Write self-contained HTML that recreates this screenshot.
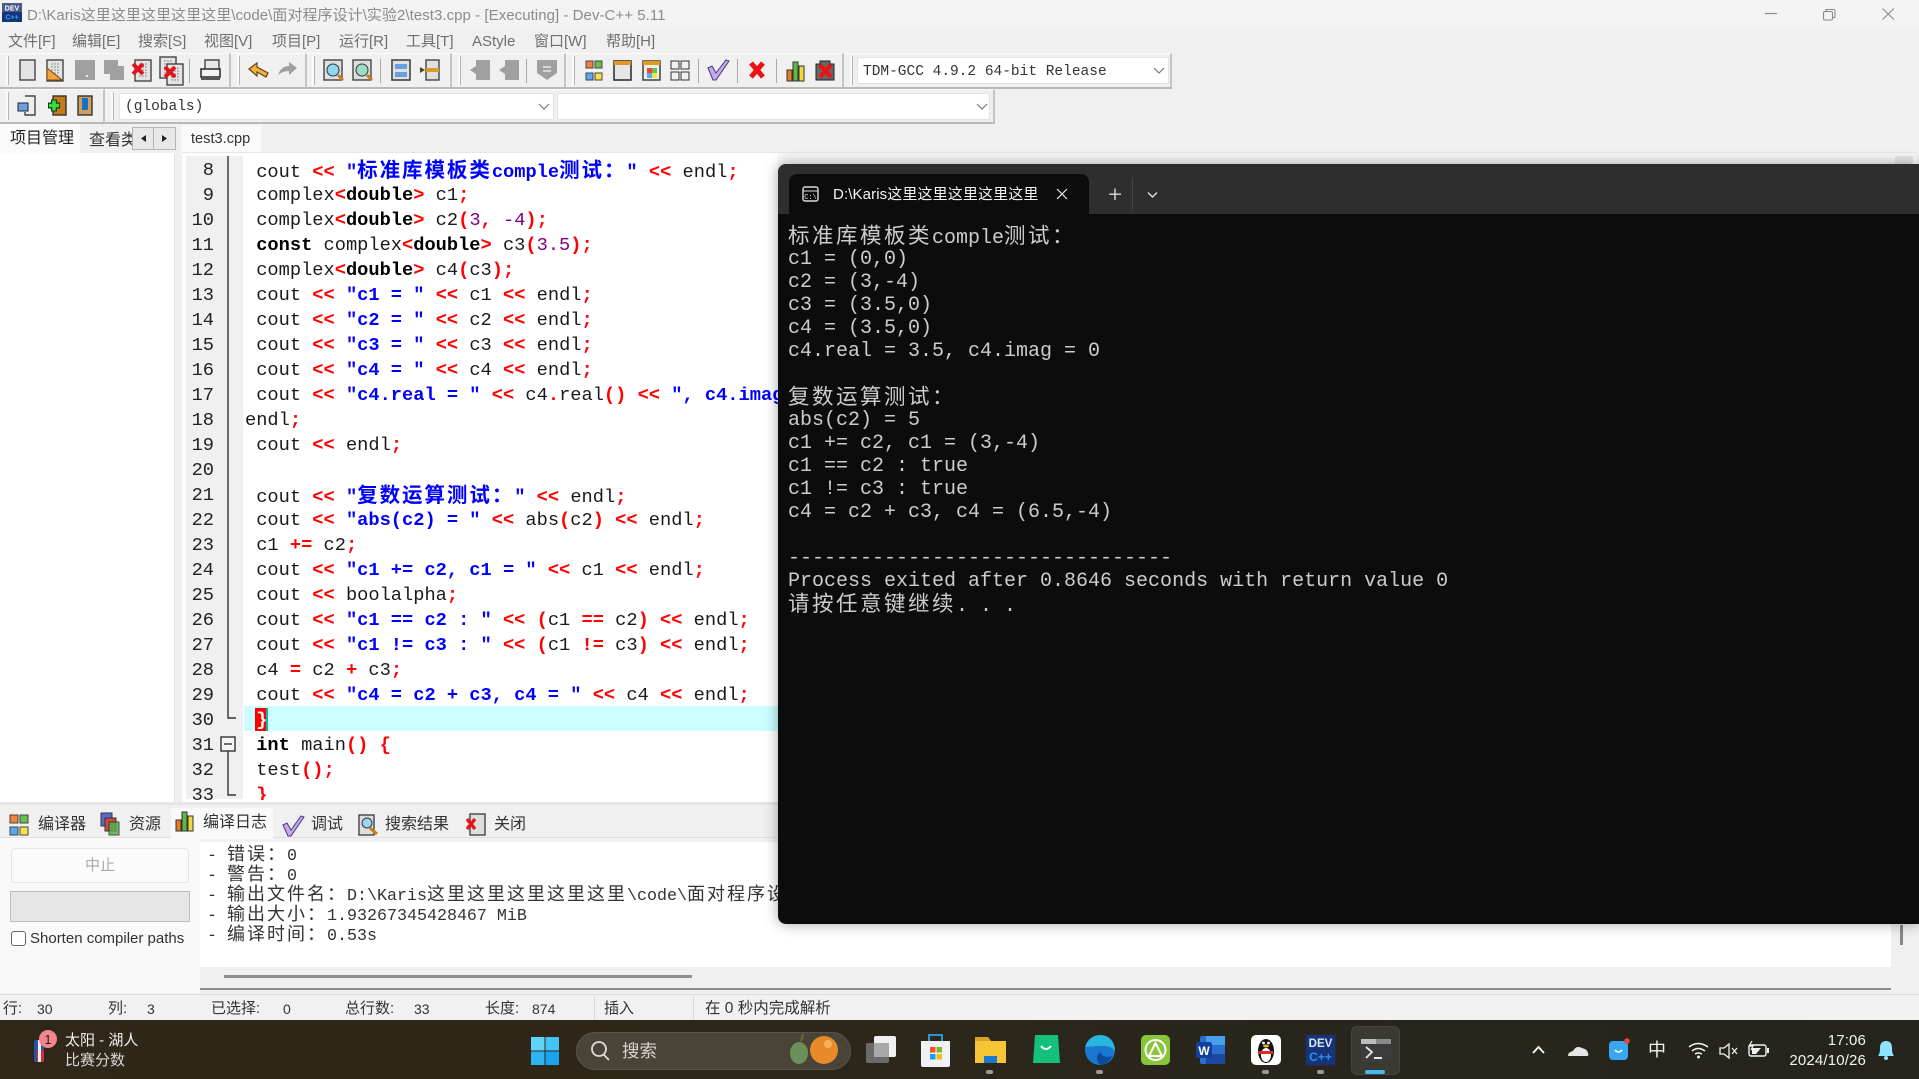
<!DOCTYPE html>
<html lang="zh"><head><meta charset="utf-8"><title>Dev-C++</title>
<style>
html,body{margin:0;padding:0;width:1919px;height:1079px;overflow:hidden;background:#f0f0f0}
body{position:relative;font-family:"Liberation Sans","Noto Sans CJK SC",sans-serif;color:#222}
.a{position:absolute;box-sizing:border-box}
.t{position:absolute;white-space:pre;line-height:20px}
.m{position:absolute;top:32px;font-size:15px;line-height:20px;color:#6f6f6f;white-space:pre}
.code{position:absolute;left:245px;top:158px;font:18.7px/25px "Liberation Mono","Noto Sans CJK SC",monospace;color:#1a1a1a}
.code div{height:25px;white-space:pre}
.code div.up{position:relative;top:-2px}
.nums{position:absolute;left:186px;width:28px;top:158px;text-align:right;font:18.7px/25px "Liberation Mono",monospace;color:#222;white-space:pre}
.s{color:#0000ff;font-weight:bold}.o{color:#ff0000;font-weight:bold}.n{color:#800080}.k{font-weight:bold;color:#000}
.c{font-style:normal;font-family:"Noto Sans CJK SC",sans-serif;font-size:20.5px;letter-spacing:1.94px}
.cc{letter-spacing:-9.3px}
.con{position:absolute;left:788px;top:225px;font:20px/23px "Liberation Mono","Noto Sans CJK SC",monospace;color:#cccccc}
.con div{height:23px;white-space:pre}
.con div.up{position:relative;top:-2px}
.con i{font-style:normal;font-family:"Noto Sans CJK SC",sans-serif;font-size:21.5px;letter-spacing:2.5px}
.log{position:absolute;left:207px;top:843px;font:16.67px/20px "Liberation Mono","Noto Sans CJK SC",monospace;color:#333}
.log div{height:20px;white-space:pre}
.log i{font-style:normal;font-family:"Noto Sans CJK SC",sans-serif;font-size:18px;letter-spacing:2px}
.tb{position:absolute;box-sizing:border-box;background:#f0f0f0;border-bottom:2px solid #b9b9b9;border-right:2px solid #c4c4c4;border-top:1px solid #fafafa}
.grip{position:absolute;width:2px;background:#fbfbfb;border-right:1px solid #b5b5b5}
.sep{position:absolute;width:1px;background:#a8a8a8;height:24px;top:59px}
.combo{position:absolute;box-sizing:border-box;background:#fff;border:1px solid #e3e3e3;border-radius:2px;font:14.5px/25px "Liberation Mono",monospace;color:#333;padding:1px 0 0 5px;white-space:pre}
.tab{position:absolute;font-size:16px;line-height:22px;top:814px;color:#333;white-space:pre}
.st{position:absolute;top:999px;font-size:15px;line-height:20px;color:#333;white-space:pre}
</style></head><body>

<!-- title bar -->
<div class="a" style="left:0;top:0;width:1919px;height:30px;background:#f3f3f3"></div>
<div class="t" style="left:27px;top:6px;font-size:15px;letter-spacing:.05px;color:#8b8b8b">D:\Karis这里这里这里这里这里\code\面对程序设计\实验2\test3.cpp - [Executing] - Dev-C++ 5.11</div>

<!-- menu -->
<div class="m" style="left:8px">文件[F]</div><div class="m" style="left:72px">编辑[E]</div><div class="m" style="left:138px">搜索[S]</div><div class="m" style="left:204px">视图[V]</div><div class="m" style="left:272px">项目[P]</div><div class="m" style="left:339px">运行[R]</div><div class="m" style="left:406px">工具[T]</div><div class="m" style="left:472px">AStyle</div><div class="m" style="left:534px">窗口[W]</div><div class="m" style="left:606px">帮助[H]</div>

<!-- toolbars -->
<div class="tb" style="left:0;top:53px;width:231px;height:36px"></div>
<div class="tb" style="left:231px;top:53px;width:76px;height:36px"></div>
<div class="tb" style="left:307px;top:53px;width:145px;height:36px"></div>
<div class="tb" style="left:452px;top:53px;width:114px;height:36px"></div>
<div class="tb" style="left:566px;top:53px;width:278px;height:36px"></div>
<div class="tb" style="left:844px;top:53px;width:328px;height:36px"></div>
<div class="tb" style="left:0;top:89px;width:105px;height:35px"></div>
<div class="tb" style="left:105px;top:89px;width:890px;height:35px"></div>
<div class="grip" style="left:6px;top:56px;height:29px"></div><div class="grip" style="left:237px;top:56px;height:29px"></div><div class="grip" style="left:312px;top:56px;height:29px"></div><div class="grip" style="left:458px;top:56px;height:29px"></div><div class="grip" style="left:572px;top:56px;height:29px"></div><div class="grip" style="left:850px;top:56px;height:29px"></div>
<div class="grip" style="left:6px;top:92px;height:28px"></div><div class="grip" style="left:111px;top:92px;height:28px"></div>
<div class="sep" style="left:189px"></div><div class="sep" style="left:380px"></div><div class="sep" style="left:526px"></div><div class="sep" style="left:698px"></div><div class="sep" style="left:737px"></div><div class="sep" style="left:776px"></div>
<div class="combo" style="left:857px;top:57px;width:312px;height:27px;padding-top:2px">TDM-GCC 4.9.2 64-bit Release</div>
<div class="combo" style="left:119px;top:93px;width:435px;height:27px">(globals)</div>
<div class="combo" style="left:557px;top:93px;width:433px;height:27px"></div>

<!-- left panel tabs -->
<div class="a" style="left:0;top:124px;width:80px;height:30px;background:#fafafa"></div>
<div class="t" style="left:10px;top:128px;font-size:16px;line-height:22px">项目管理</div>
<div class="a" style="left:89px;top:126px;width:43px;height:26px;overflow:hidden;font-size:16px;line-height:26px;padding-top:2px;color:#333;background:#f0f0f0;white-space:nowrap">查看类</div>
<div class="a" style="left:132px;top:127px;width:44px;height:23px;background:#e8e8e8;border:1px solid #b4b4b4"></div>
<div class="a" style="left:153px;top:127px;width:1px;height:23px;background:#b4b4b4"></div>
<div class="a" style="left:0;top:153px;width:175px;height:649px;background:#fff;border-right:1px solid #e4e4e4"></div>

<div class="a" style="left:181px;top:125px;width:80px;height:29px;background:#fafafa"></div>
<div class="t" style="left:191px;top:128px;font-size:14.6px;line-height:22px;color:#333">test3.cpp</div>

<!-- editor -->
<div class="a" style="left:182px;top:152px;width:1734px;height:650px;background:#f7f7f7;border-top:1px solid #e6e6e6"></div>
<div class="a" style="left:182px;top:153px;width:596px;height:649px;background:#fff"></div>
<div class="a" style="left:1895px;top:156px;width:18px;height:10px;background:#e6e6e6"></div>
<div class="a" style="left:186px;top:156px;width:57px;height:643px;background:#f0f0f0"></div>
<div class="a" style="left:244px;top:706px;width:540px;height:25px;background:#ccffff"></div>
<div class="a" style="left:255px;top:708px;width:12px;height:23px;background:#ff0000"></div>
<div class="a" style="left:266px;top:708px;width:2px;height:23px;background:#00b8b8"></div>
<div class="a" style="left:0;top:802px;width:778px;height:3px;background:#e6e6e6"></div>

<div style="position:absolute;left:0;top:0;width:778px;height:800px;overflow:hidden">
<div class="nums">8
9
10
11
12
13
14
15
16
17
18
19
20
21
22
23
24
25
26
27
28
29
30
31
32
33</div>
<div class="code"><div class="up"> cout <span class="o">&lt;&lt;</span> <span class="s">"<i class="c">标准库模板类</i>comple<i class="c">测试</i><i class="c cc">：</i> "</span> <span class="o">&lt;&lt;</span> endl<span class="o">;</span></div>
<div> complex<span class="o">&lt;</span><span class="k">double</span><span class="o">&gt;</span> c1<span class="o">;</span></div>
<div> complex<span class="o">&lt;</span><span class="k">double</span><span class="o">&gt;</span> c2<span class="o">(</span><span class="n">3</span><span class="o">,</span> <span class="n">-4</span><span class="o">);</span></div>
<div> <span class="k">const</span> complex<span class="o">&lt;</span><span class="k">double</span><span class="o">&gt;</span> c3<span class="o">(</span><span class="n">3.5</span><span class="o">);</span></div>
<div> complex<span class="o">&lt;</span><span class="k">double</span><span class="o">&gt;</span> c4<span class="o">(</span>c3<span class="o">);</span></div>
<div> cout <span class="o">&lt;&lt;</span> <span class="s">"c1 = "</span> <span class="o">&lt;&lt;</span> c1 <span class="o">&lt;&lt;</span> endl<span class="o">;</span></div>
<div> cout <span class="o">&lt;&lt;</span> <span class="s">"c2 = "</span> <span class="o">&lt;&lt;</span> c2 <span class="o">&lt;&lt;</span> endl<span class="o">;</span></div>
<div> cout <span class="o">&lt;&lt;</span> <span class="s">"c3 = "</span> <span class="o">&lt;&lt;</span> c3 <span class="o">&lt;&lt;</span> endl<span class="o">;</span></div>
<div> cout <span class="o">&lt;&lt;</span> <span class="s">"c4 = "</span> <span class="o">&lt;&lt;</span> c4 <span class="o">&lt;&lt;</span> endl<span class="o">;</span></div>
<div> cout <span class="o">&lt;&lt;</span> <span class="s">"c4.real = "</span> <span class="o">&lt;&lt;</span> c4<span class="o">.</span>real<span class="o">()</span> <span class="o">&lt;&lt;</span> <span class="s">", c4.imag = "</span> <span class="o">&lt;&lt;</span> c4<span class="o">.</span>imag<span class="o">()</span> <span class="o">&lt;&lt;</span></div>
<div>endl<span class="o">;</span></div>
<div> cout <span class="o">&lt;&lt;</span> endl<span class="o">;</span></div>
<div> </div>
<div class="up"> cout <span class="o">&lt;&lt;</span> <span class="s">"<i class="c">复数运算测试</i><i class="c cc">：</i> "</span> <span class="o">&lt;&lt;</span> endl<span class="o">;</span></div>
<div> cout <span class="o">&lt;&lt;</span> <span class="s">"abs(c2) = "</span> <span class="o">&lt;&lt;</span> abs<span class="o">(</span>c2<span class="o">)</span> <span class="o">&lt;&lt;</span> endl<span class="o">;</span></div>
<div> c1 <span class="o">+=</span> c2<span class="o">;</span></div>
<div> cout <span class="o">&lt;&lt;</span> <span class="s">"c1 += c2, c1 = "</span> <span class="o">&lt;&lt;</span> c1 <span class="o">&lt;&lt;</span> endl<span class="o">;</span></div>
<div> cout <span class="o">&lt;&lt;</span> boolalpha<span class="o">;</span></div>
<div> cout <span class="o">&lt;&lt;</span> <span class="s">"c1 == c2 : "</span> <span class="o">&lt;&lt;</span> <span class="o">(</span>c1 <span class="o">==</span> c2<span class="o">)</span> <span class="o">&lt;&lt;</span> endl<span class="o">;</span></div>
<div> cout <span class="o">&lt;&lt;</span> <span class="s">"c1 != c3 : "</span> <span class="o">&lt;&lt;</span> <span class="o">(</span>c1 <span class="o">!=</span> c3<span class="o">)</span> <span class="o">&lt;&lt;</span> endl<span class="o">;</span></div>
<div> c4 <span class="o">=</span> c2 <span class="o">+</span> c3<span class="o">;</span></div>
<div> cout <span class="o">&lt;&lt;</span> <span class="s">"c4 = c2 + c3, c4 = "</span> <span class="o">&lt;&lt;</span> c4 <span class="o">&lt;&lt;</span> endl<span class="o">;</span></div>
<div> <span style="color:#fff;font-weight:bold">}</span></div>
<div> <span class="k">int</span> main<span class="o">()</span> <span class="o">{</span></div>
<div> test<span class="o">();</span></div>
<div> <span class="o">}</span></div></div>
</div>

<!-- fold marks -->
<svg class="a" style="left:215px;top:153px" width="28" height="650" viewBox="0 0 28 650" fill="none" stroke="#333" stroke-width="1.4">
<path d="M13 3V565H21M13 598V642H21"/><rect x="6" y="584" width="14" height="14" fill="#f5f5f5"/><path d="M9 591H17"/>
</svg>

<!-- bottom tabs -->
<div class="a" style="left:0;top:837px;width:1919px;height:1px;background:#e0e0e0"></div>
<div class="a" style="left:171px;top:808px;width:102px;height:31px;background:#f9f9f9"></div>
<div class="tab" style="left:38px">编译器</div><div class="tab" style="left:129px">资源</div><div class="tab" style="left:203px;top:812px">编译日志</div><div class="tab" style="left:311px">调试</div><div class="tab" style="left:385px">搜索结果</div><div class="tab" style="left:494px">关闭</div>

<!-- bottom-left controls -->
<div class="a" style="left:0;top:838px;width:200px;height:155px;background:#f9f9f9"></div>
<div class="a" style="left:11px;top:848px;width:178px;height:35px;background:#fbfbfb;border:1px solid #e6e6e6;border-radius:4px;text-align:center;line-height:33px;font-size:15px;color:#aaa">中止</div>
<div class="a" style="left:10px;top:891px;width:180px;height:31px;background:#e6e6e6;border:1px solid #bcbcbc"></div>
<div class="a" style="left:11px;top:931px;width:15px;height:15px;background:#fff;border:1px solid #666;border-radius:3px"></div>
<div class="t" style="left:30px;top:929px;font-size:15px;color:#333">Shorten compiler paths</div>

<!-- log -->
<div class="a" style="left:200px;top:842px;width:1691px;height:125px;background:#fff"></div>
<div class="log"><div>- <i>错误：</i>0</div><div>- <i>警告：</i>0</div><div>- <i>输出文件名：</i>D:\Karis<i>这里这里这里这里这里</i>\code\<i>面对程序设计</i>\<i>实验</i>2\test3.exe</div><div>- <i>输出大小：</i>1.93267345428467 MiB</div><div>- <i>编译时间：</i>0.53s</div></div>
<div class="a" style="left:200px;top:967px;width:1691px;height:23px;background:#f0f0f0;border-bottom:2px solid #8d8d8d"></div>
<div class="a" style="left:224px;top:975px;width:468px;height:3px;background:#8f8f8f"></div>
<div class="a" style="left:1900px;top:925px;width:3px;height:20px;background:#888"></div>

<!-- status bar -->
<div class="a" style="left:0;top:994px;width:1919px;height:27px;background:#f1f1f1;border-top:1px solid #dcdcdc"></div>
<div class="st" style="left:3px">行:</div><div class="st" style="left:37px;font-size:14px">30</div><div class="st" style="left:108px">列:</div><div class="st" style="left:147px;font-size:14px">3</div><div class="st" style="left:211px">已选择:</div><div class="st" style="left:283px;font-size:14px">0</div><div class="st" style="left:345px">总行数:</div><div class="st" style="left:414px;font-size:14px">33</div><div class="st" style="left:485px">长度:</div><div class="st" style="left:532px;font-size:14px">874</div><div class="st" style="left:604px">插入</div><div class="st" style="left:705px;font-size:15.5px">在 0 秒内完成解析</div>
<div class="a" style="left:594px;top:996px;width:1px;height:24px;background:#d8d8d8"></div><div class="a" style="left:693px;top:996px;width:1px;height:24px;background:#d8d8d8"></div>

<!-- taskbar -->
<div class="a" style="left:0;top:1020px;width:1919px;height:59px;background:linear-gradient(90deg,#2f2717 0%,#2d2719 40%,#27261d 75%,#24241d 100%)"></div>
<div class="t" style="left:65px;top:1031px;font-size:15px;color:#f2f2f2">太阳 - 湖人</div>
<div class="t" style="left:65px;top:1051px;font-size:15px;color:#d8d8d8">比赛分数</div>
<div class="a" style="left:576px;top:1032px;width:275px;height:38px;border-radius:19px;background:#4a4438;border:1px solid #5a554a"></div>
<div class="t" style="left:622px;top:1039px;font-size:17.5px;line-height:24px;color:#d6d3cc">搜索</div>
<div class="t" style="left:1760px;top:1031px;width:106px;text-align:right;font-size:15px;letter-spacing:.15px;color:#f2f2f2">17:06</div>
<div class="t" style="left:1760px;top:1051px;width:106px;text-align:right;font-size:15px;letter-spacing:.15px;color:#f2f2f2">2024/10/26</div>
<div class="t" style="left:1648px;top:1038px;font-size:18px;line-height:24px;color:#f2f2f2">中</div>
<div class="a" style="left:1351px;top:1026px;width:49px;height:49px;background:#3a3a33;border-radius:6px;border:1px solid #45453d"></div>

<!-- console window -->
<div class="a" style="left:778px;top:164px;width:1141px;height:760px;background:#0c0c0c;border-radius:8px 0 0 8px;box-shadow:0 0 14px rgba(0,0,0,.35)"></div>
<div class="a" style="left:778px;top:164px;width:1141px;height:50px;background:#2e2e2e;border-radius:8px 0 0 0"></div>
<div class="a" style="left:789px;top:174px;width:300px;height:40px;background:#0c0c0c;border-radius:8px 8px 0 0"></div>
<div class="t" style="left:833px;top:185px;font-size:15px;letter-spacing:.12px;color:#f4f4f4">D:\Karis这里这里这里这里这里</div>
<div class="a" style="left:1132px;top:178px;width:1px;height:32px;background:#454545"></div>
<div class="con"><div class="up"><i>标准库模板类</i>comple<i>测试：</i></div><div>c1 = (0,0)</div><div>c2 = (3,-4)</div><div>c3 = (3.5,0)</div><div>c4 = (3.5,0)</div><div>c4.real = 3.5, c4.imag = 0</div><div> </div><div class="up"><i>复数运算测试：</i></div><div>abs(c2) = 5</div><div>c1 += c2, c1 = (3,-4)</div><div>c1 == c2 : true</div><div>c1 != c3 : true</div><div>c4 = c2 + c3, c4 = (6.5,-4)</div><div> </div><div>--------------------------------</div><div>Process exited after 0.8646 seconds with return value 0</div><div class="up"><i>请按任意键继续</i>. . .</div></div>

<!-- all icons -->
<svg class="a" style="left:0;top:0" width="1919" height="1079" viewBox="0 0 1919 1079">
<defs>
<g id="paper"><rect x="-8" y="-10" width="16" height="21" fill="#e4e4e4" stroke="#444" stroke-width="1.4"/><path d="M-4-6H5M-4-3H5M-4 0H5M-4 3H5M-4 6H5" stroke="#8e8e8e" stroke-dasharray="2 1"/></g>
<g id="xr"><path d="M-5-5L5 5M5-5L-5 5" stroke="#e2141c" stroke-width="4" fill="none"/></g>
</defs>
<!-- app logo -->
<rect x="2" y="3" width="20" height="19" fill="#14357a"/><rect x="2" y="3" width="20" height="9" fill="#4a5a8a"/><text x="12" y="10.5" text-anchor="middle" font-family="Liberation Sans" font-size="7" font-weight="bold" fill="#fff">DEV</text><text x="12" y="19.5" text-anchor="middle" font-family="Liberation Sans" font-size="7" font-weight="bold" fill="#35a0ff">C++</text>
<!-- window controls -->
<path d="M1765 13.5H1777" stroke="#8a8a8a" stroke-width="1.2"/>
<g fill="none" stroke="#8a8a8a" stroke-width="1.1"><rect x="1823.5" y="11.5" width="9" height="8.5" rx="1.5"/><path d="M1826 11V9.5h7.5q1.5 0 1.500 1.500V17.500h-2"/><path d="M1882.500 8.500L1894 19.500M1894 8.500L1882.500 19.500"/></g>

<!-- row 1 icons -->
<rect x="20" y="60" width="15" height="20" fill="#e4e4e4" stroke="#444" stroke-width="1.4"/>
<use href="#paper" x="55" y="70"/><path d="M47 68L62 80H47Z" fill="#f2a33a" stroke="#7a4a10"/>
<path d="M75 60H95V80H75Z" fill="#a0a0a0"/><rect x="86" y="75" width="2" height="2" fill="#eee"/>
<path d="M104 60H118V66H124V80H110V74H104Z" fill="#a0a0a0"/>
<use href="#paper" x="143" y="70"/><use href="#xr" x="138" y="69"/>
<use href="#paper" x="168" y="67"/><use href="#paper" x="175" y="74"/><use href="#xr" x="170" y="72"/>
<path d="M205 69V60H219V69" fill="#e8e8e8" stroke="#444" stroke-width="1.4"/><rect x="201" y="69" width="19" height="8" fill="#f3f3f3" stroke="#333" stroke-width="1.6"/><rect x="201" y="77" width="19" height="3" fill="#555"/>
<path d="M249 69L257 63V67L268 73L266 77L257 72V76Z" fill="#f0b33a" stroke="#6a4010" stroke-width="1.200"/>
<path d="M297 68L289 62V66Q281 66 278 75Q283 71 289 71V75Z" fill="#a0a0a0"/>
<rect x="324" y="60" width="18" height="20" fill="#dedede" stroke="#444" stroke-width="1.4"/><circle cx="333" cy="70" r="6" fill="#8fd6ee" stroke="#334"/><path d="M338 75L343 80" stroke="#c97f15" stroke-width="3"/>
<rect x="353" y="60" width="18" height="20" fill="#dedede" stroke="#444" stroke-width="1.4"/><circle cx="362" cy="70" r="6" fill="#9be0c4" stroke="#334"/><path d="M367 75L372 80" stroke="#c97f15" stroke-width="3"/>
<rect x="392" y="60" width="18" height="20" fill="#e0e0e0" stroke="#444" stroke-width="1.6"/><rect x="395" y="64" width="12" height="5" fill="#6a9ee0"/><rect x="395" y="72" width="12" height="5" fill="#6a9ee0"/>
<rect x="426" y="60" width="13" height="20" fill="#e0e0e0" stroke="#444" stroke-width="1.4"/><rect x="426" y="68" width="13" height="4" fill="#dd9a20"/><path d="M420 67L425 70L420 73Z" fill="#5a4410"/>
<path d="M476 60H490V80H476V74L470 70L476 66Z" fill="#a0a0a0"/>
<path d="M505 60H519V80H505V74L499 70L505 66Z" fill="#a0a0a0"/>
<path d="M537 60H557V73L547 80L537 73Z" fill="#a0a0a0"/><path d="M543 67H551M543 71H551" stroke="#e8e8e8" stroke-width="1.5"/>
<rect x="586" y="61" width="7" height="7" fill="#f08040" stroke="#444"/><rect x="595" y="61" width="7" height="7" fill="#6ac04a" stroke="#444"/><rect x="586" y="73" width="7" height="7" fill="#5aa8f0" stroke="#444"/><rect x="595" y="73" width="7" height="7" fill="#f4e44a" stroke="#444"/>
<rect x="614" y="61" width="17" height="19" fill="#e6e6e6" stroke="#333" stroke-width="1.6"/><rect x="614" y="61" width="17" height="4" fill="#e09a20"/>
<rect x="643" y="61" width="17" height="19" fill="#eee" stroke="#333" stroke-width="1.400"/><rect x="643" y="61" width="17" height="4" fill="#e09a20"/><rect x="647" y="68" width="5" height="5" fill="#e5483a"/><rect x="652" y="68" width="5" height="5" fill="#6ac04a"/><rect x="647" y="73" width="5" height="5" fill="#5aa8f0"/><rect x="652" y="73" width="5" height="5" fill="#f4e44a"/>
<rect x="671" y="61" width="8" height="8" fill="#f0f0f0" stroke="#333"/><rect x="681" y="61" width="8" height="8" fill="#f0f0f0" stroke="#333"/><rect x="671" y="72" width="8" height="8" fill="#f0f0f0" stroke="#333"/><rect x="681" y="72" width="8" height="8" fill="#f0f0f0" stroke="#333"/>
<path d="M708 68L712 66L716 73L726 60L729 61L716 80L713 80Z" fill="#c4a9ee" stroke="#4a3a7a" stroke-width="1"/>
<path d="M751 63L763 77M763 63L751 77" stroke="#ee1111" stroke-width="5"/>
<rect x="787" y="70" width="5" height="11" fill="#ec7a20" stroke="#333"/><rect x="793" y="62" width="5" height="19" fill="#5cb84a" stroke="#333"/><rect x="799" y="66" width="5" height="15" fill="#f0d840" stroke="#333"/>
<path d="M816 64H820V61H830V64H834V80H816Z" fill="#666" stroke="#222"/><path d="M820 65L831 77M831 65L820 77" stroke="#ee1111" stroke-width="4.200"/>

<!-- combo chevrons -->
<g fill="none" stroke="#777" stroke-width="1.200"><path d="M1154 68L1159 73L1164 68"/><path d="M539 104L544 109L549 104"/><path d="M977 104L982 109L987 104"/></g>
<!-- row 2 icons -->
<path d="M25 96H35V115H25V112" fill="#eee" stroke="#444" stroke-width="1.400"/><rect x="18" y="103" width="10" height="8" fill="#6a9ee0" stroke="#223"/>
<rect x="53" y="96" width="13" height="19" fill="#c47a18" stroke="#333" stroke-width="1.400"/><path d="M48 105.500H60M54 99.500V111.500" stroke="#1a3a1a" stroke-width="6"/><path d="M49 105.500H59M54 100.500V110.500" stroke="#3ae03a" stroke-width="3.500"/>
<rect x="78" y="96" width="14" height="19" fill="#cca060" stroke="#333" stroke-width="1.400"/><rect x="82" y="98" width="6" height="12" fill="#1d6fc0"/>

<!-- arrows of left tabs -->
<path d="M146 135V142L141 138.500Z" fill="#222"/><path d="M162 135V142L167 138.500Z" fill="#222"/>

<!-- bottom tab icons -->
<rect x="10" y="815" width="8" height="8" fill="#f08040" stroke="#444"/><rect x="20" y="815" width="8" height="8" fill="#6ac04a" stroke="#444"/><rect x="10" y="827" width="8" height="8" fill="#5aa8f0" stroke="#444"/><rect x="20" y="827" width="8" height="8" fill="#f4e44a" stroke="#444"/>
<rect x="101" y="813" width="11" height="13" fill="#5a6ad0" stroke="#333"/><rect x="105" y="818" width="11" height="13" fill="#d04a3a" stroke="#333"/><rect x="109" y="822" width="10" height="13" fill="#50b050" stroke="#333" opacity=".85"/>
<rect x="176" y="820" width="5" height="11" fill="#ec7a20" stroke="#333"/><rect x="182" y="812" width="5" height="19" fill="#5cb84a" stroke="#333"/><rect x="188" y="816" width="5" height="15" fill="#f0d840" stroke="#333"/>
<path d="M283 825L287 823L291 830L301 816L304 817L291 836L288 836Z" fill="#c4a9ee" stroke="#4a3a7a"/>
<rect x="359" y="815" width="15" height="20" fill="#dedede" stroke="#444" stroke-width="1.400"/><circle cx="367" cy="823" r="5" fill="#9bd8ee" stroke="#334"/><path d="M370 828L377 834" stroke="#c97f15" stroke-width="3"/>
<rect x="470" y="814" width="15" height="21" fill="#dedede" stroke="#444" stroke-width="1.400"/><path d="M467 819L475 829M475 819L467 829" stroke="#e2141c" stroke-width="3.400"/>

<!-- taskbar left -->
<rect x="34" y="1040" width="10" height="22" rx="2" fill="#2056a8"/><rect x="37" y="1050" width="7" height="12" fill="#d62a3a"/><rect x="38" y="1040" width="3" height="22" fill="#f0f0f0"/>
<circle cx="48" cy="1039" r="9" fill="#f3858d"/><text x="48" y="1044" text-anchor="middle" font-family="Liberation Sans" font-size="13" fill="#222">1</text>
<!-- windows -->
<g><rect x="531" y="1037" width="13.500" height="13.500" fill="#5fd4fa"/><rect x="545.500" y="1037" width="13.500" height="13.500" fill="#45c3f6"/><rect x="531" y="1051.500" width="13.500" height="13.500" fill="#2fb4f2"/><rect x="545.500" y="1051.500" width="13.500" height="13.500" fill="#1aa3ee"/></g>
<!-- search -->
<circle cx="599" cy="1049" r="7" fill="none" stroke="#ddd" stroke-width="1.800"/><path d="M604 1055L609 1060" stroke="#ddd" stroke-width="1.800"/>
<ellipse cx="799" cy="1053" rx="9" ry="11" fill="#6d8f5a"/><circle cx="824" cy="1050" r="14" fill="#e8892a"/><circle cx="828" cy="1044" r="4" fill="#f5b060"/><path d="M801 1041l2-7" stroke="#6b6b3a" stroke-width="2"/>
<!-- task view -->
<rect x="866" y="1043" width="23" height="20" rx="2" fill="#6a6a6a"/><rect x="874" y="1036" width="22" height="21" rx="2" fill="#f0f0f0"/><rect x="874" y="1043" width="15" height="14" fill="#a8a8a8"/>
<!-- store -->
<path d="M921 1041H950V1065Q950 1067 948 1067H923Q921 1067 921 1065Z" fill="#f1f1f1"/><path d="M929 1041V1035H942V1041" fill="none" stroke="#2aa8e8" stroke-width="1.800"/><rect x="930" y="1047" width="5.500" height="5.500" fill="#f0522a"/><rect x="936.500" y="1047" width="5.500" height="5.500" fill="#7ab82a"/><rect x="930" y="1054" width="5.500" height="5.500" fill="#1aa0e8"/><rect x="936.500" y="1054" width="5.500" height="5.500" fill="#f8b81a"/>
<!-- explorer -->
<path d="M975 1037H988L991 1041H1006V1063H975Z" fill="#f4c534"/><path d="M975 1037H988L991 1041H975Z" fill="#d9a02a"/><rect x="984" y="1056" width="13" height="7" fill="#1b7ad0"/>
<rect x="986" y="1070" width="7" height="4" rx="2" fill="#9a9a9a"/>
<!-- green app -->
<path d="M1035 1035H1058L1060 1063H1033Z" fill="#14c07c"/><path d="M1041 1046Q1046 1052 1051 1046" fill="none" stroke="#fff" stroke-width="1.800"/>
<!-- edge -->
<circle cx="1100" cy="1050" r="15" fill="#1a78d0"/><path d="M1085 1047Q1089 1035 1101 1035Q1114 1036 1115 1051Q1110 1045 1102 1046Q1092 1046 1085 1047Z" fill="#2ab4e0"/><path d="M1100 1052Q1103 1059 1112 1056Q1108 1065 1100 1065Q1094 1059 1100 1052Z" fill="#0c4a9c"/>
<rect x="1096" y="1070" width="7" height="4" rx="2" fill="#9a9a9a"/>
<!-- green A -->
<rect x="1141" y="1035" width="29" height="30" rx="5" fill="#8ac43a"/><circle cx="1155.500" cy="1050" r="10" fill="none" stroke="#fff" stroke-width="2"/><path d="M1155.500 1043L1162 1056H1149Z" fill="none" stroke="#fff" stroke-width="2"/>
<!-- word -->
<rect x="1200" y="1036" width="25" height="28" rx="2" fill="#2a6fd0"/><rect x="1206" y="1036" width="19" height="9" fill="#45a0ee"/><rect x="1206" y="1054" width="19" height="10" fill="#1a4aa0"/><rect x="1196" y="1042" width="16" height="16" rx="2" fill="#13409a"/><text x="1204" y="1055" text-anchor="middle" font-family="Liberation Sans" font-size="12" font-weight="bold" fill="#fff">W</text>
<!-- qq -->
<rect x="1251" y="1035" width="30" height="30" rx="5" fill="#fff"/><ellipse cx="1266" cy="1051" rx="8" ry="12" fill="#111"/><ellipse cx="1266" cy="1055" rx="5" ry="7" fill="#fff"/><rect x="1258" y="1051" width="15" height="3" fill="#e02a2a"/><ellipse cx="1266" cy="1046" rx="3" ry="1.500" fill="#f0b020"/><circle cx="1263.500" cy="1043" r="1.400" fill="#fff"/><circle cx="1268.500" cy="1043" r="1.400" fill="#fff"/>
<rect x="1262" y="1070" width="7" height="4" rx="2" fill="#9a9a9a"/>
<!-- devc -->
<rect x="1306" y="1035" width="29" height="30" fill="#14357a" stroke="#2a2a5a"/><text x="1320.500" y="1047" text-anchor="middle" font-family="Liberation Sans" font-size="11.500" font-weight="bold" fill="#dfe4f4">DEV</text><text x="1320.500" y="1061" text-anchor="middle" font-family="Liberation Sans" font-size="12" font-weight="bold" fill="#2f8ff0">C++</text>
<rect x="1317" y="1070" width="7" height="4" rx="2" fill="#9a9a9a"/>
<!-- terminal -->
<rect x="1361" y="1039" width="30" height="23" rx="2" fill="#3c3c3c"/><rect x="1361" y="1039" width="30" height="5" fill="#8a8a8a"/><rect x="1361" y="1039" width="15" height="5" fill="#bdbdbd"/><path d="M1366 1047L1372 1052L1366 1058" fill="none" stroke="#e8e8e8" stroke-width="1.800"/><path d="M1374 1058H1382" stroke="#e8e8e8" stroke-width="2"/>
<rect x="1365" y="1070" width="20" height="4" rx="2" fill="#48b8ee"/>

<!-- tray -->
<path d="M1533 1053L1538.500 1047L1544 1053" fill="none" stroke="#fff" stroke-width="1.800"/>
<path d="M1568 1056Q1568 1052 1573 1051Q1576 1045 1582 1048Q1587 1049 1588 1053Q1589 1056 1587 1056Z" fill="#e6e6e6"/>
<rect x="1609" y="1041" width="19" height="19" rx="4" fill="#3aa8f0"/><circle cx="1627" cy="1041" r="2.800" fill="#f04040"/><path d="M1615 1050Q1618.500 1054 1622 1050" fill="none" stroke="#fff" stroke-width="1.600"/>
<g fill="none" stroke="#f2f2f2" stroke-width="1.500"><path d="M1689 1047Q1698 1040 1708 1047M1692 1051Q1698 1046 1705 1051M1695 1054Q1698 1052 1702 1054"/></g><circle cx="1698.500" cy="1057" r="1.500" fill="#f2f2f2"/>
<path d="M1720 1048H1724L1729 1044V1058L1724 1054H1720Z" fill="none" stroke="#f2f2f2" stroke-width="1.300"/><path d="M1732 1048L1737 1054M1737 1048L1732 1054" stroke="#f2f2f2" stroke-width="1.200"/>
<rect x="1749" y="1045" width="17" height="11" rx="2" fill="none" stroke="#f2f2f2" stroke-width="1.400"/><rect x="1767" y="1048" width="2" height="5" fill="#f2f2f2"/><path d="M1752 1054V1048H1761L1756 1054Z" fill="#f2f2f2"/><path d="M1752 1041L1749 1046H1753L1751 1050" fill="none" stroke="#f2f2f2" stroke-width="1.200"/>
<path d="M1878 1056Q1880 1054 1880 1048Q1880 1041 1886 1041Q1892 1041 1892 1048Q1892 1054 1894 1056Z" fill="#8ee4ff"/><circle cx="1886" cy="1058" r="2" fill="#8ee4ff"/>

<!-- console icons -->
<rect x="803" y="187" width="15" height="14" rx="2" fill="none" stroke="#ddd" stroke-width="1.400"/><path d="M803 191H818" stroke="#ddd"/><text x="810.500" y="199" text-anchor="middle" font-family="Liberation Mono" font-size="7" fill="#ddd">C:\</text>
<path d="M1057 189L1067 199M1067 189L1057 199" stroke="#eee" stroke-width="1.200"/>
<path d="M1115 188.500V200M1109.200 194.200H1121" stroke="#ddd" stroke-width="1.400"/>
<path d="M1148 192.500L1152.500 197L1157 192.500" fill="none" stroke="#ddd" stroke-width="1.400"/>
</svg>
</body></html>
